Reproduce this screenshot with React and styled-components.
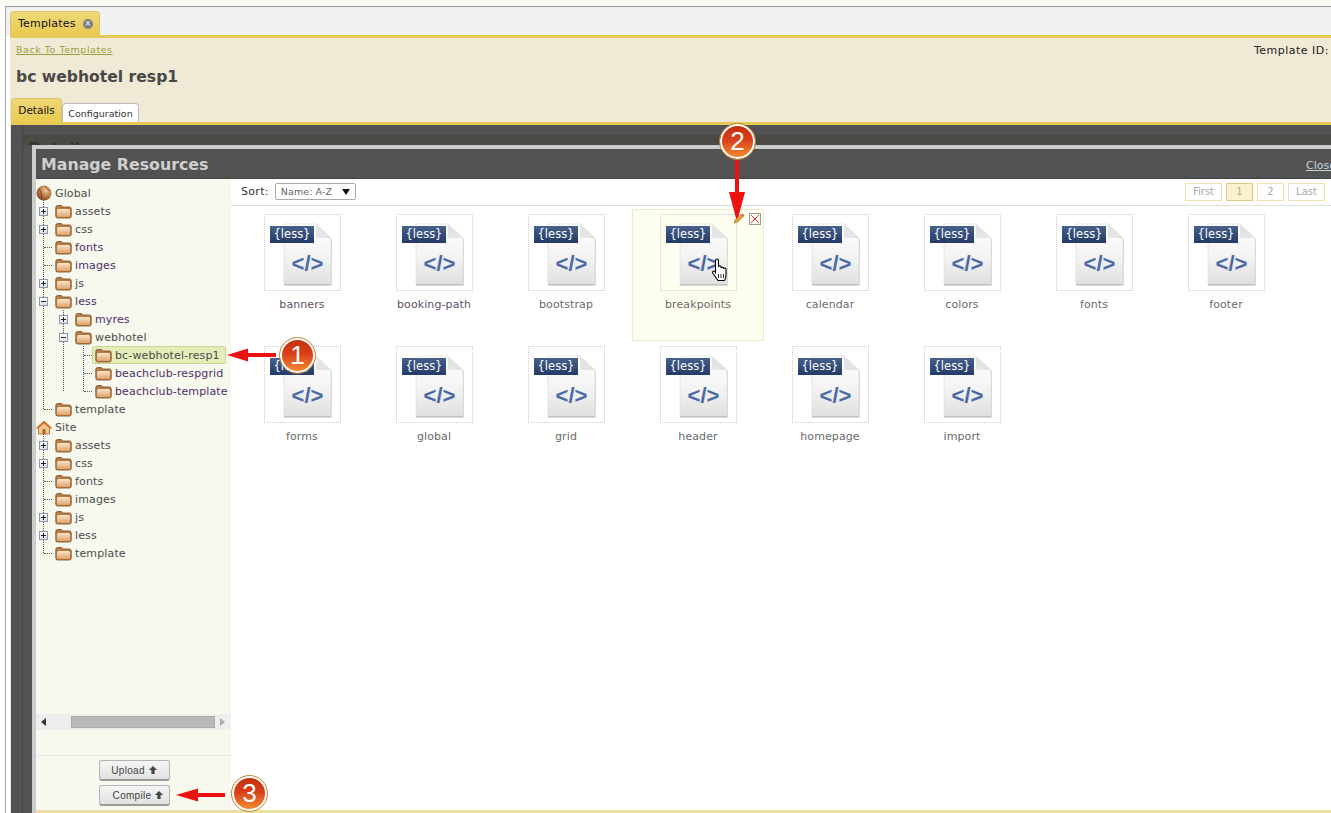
import React from "react";
import styled, { createGlobalStyle } from "styled-components";

const Global = createGlobalStyle`
  html, body { margin: 0; padding: 0; width: 1331px; height: 813px; overflow: hidden; background: #fff; }
  * { box-sizing: border-box; }
  body { font-family: "DejaVu Sans", Verdana, sans-serif; font-size: 11px; color: #444; }
`;

const Page = styled.div`position: relative; width: 1331px; height: 813px; overflow: hidden; background: linear-gradient(#fbfbf4 0 6px, #fff 6px); padding: 6px 0 0 5px;`;
const Frame = styled.div`height: 807px; border-top: 1px solid #999; border-left: 1px solid #aaa; display: flex; flex-direction: column;`;
const TabBar = styled.div`height: 28px; flex: none; background: #f1f1f2; padding: 4px 0 0 4px; display: flex;`;
const TopTab = styled.div`width: 90px; height: 24px; border-radius: 4px 4px 0 0; border: 1px solid #dcc566; border-bottom: 0; background: linear-gradient(#eed878, #eacb52); color: #111; display: flex; align-items: center; gap: 7px; padding-left: 7px; font-size: 11px; letter-spacing: .2px;`;
const CloseDot = styled.span`width: 10px; height: 10px; border-radius: 50%; background: #7c7c84; color: #fff; font-size: 8px; line-height: 10px; text-align: center; letter-spacing: 0;`;

const Panel = styled.div`flex: 1; min-height: 0; margin-left: 4px; background: #efe9d5; border-top: 3px solid #e6c957; display: flex; flex-direction: column;`;
const InfoRow = styled.div`height: 22px; padding: 6px 2px 0 6px; display: flex; justify-content: space-between;`;
const BackLink = styled.a`font-size: 9.5px; letter-spacing: .54px; color: #98a33f; text-decoration: underline;`;
const TemplateId = styled.span`font-size: 11px; letter-spacing: .5px; color: #222; line-height: 14px;`;
const Title = styled.h1`margin: 5px 0 0 6px; height: 24px; font-size: 15.6px; line-height: 24px; font-weight: 700; color: #484848; white-space: nowrap;`;
const SubTabs = styled.div`height: 24px; margin: 9px 0 0 1px; display: flex; align-items: flex-end; flex: none;`;
const SubTab = styled.div`
  border-radius: 4px 4px 0 0;
  color: ${p => (p.$active ? "#111" : "#333")};
  font-size: ${p => (p.$active ? "10.5px" : "9.5px")};
  width: ${p => (p.$active ? "51px" : "77px")};
  height: ${p => (p.$active ? "24px" : "19px")};
  padding-bottom: ${p => (p.$active ? "2px" : "0")};
  background: ${p => (p.$active ? "linear-gradient(#eed878, #eaca50)" : "#fff")};
  border: 1px solid ${p => (p.$active ? "#dcc566" : "#bbb")};
  border-bottom: 0;
  display: flex; align-items: center; justify-content: center;
`;
const DarkArea = styled.div`position: relative; flex: 1; min-height: 0; margin-left: 1px; border-top: 3px solid #e6c957; background: linear-gradient(90deg, #525252 0 11px, #444 11px 12px, #525252 12px); padding: 20px 0 0 21px;`;
const BehindTitle = styled.div`position: absolute; top: 10px; left: 12px; width: 1400px; font-size: 15.6px; line-height: 20px; font-weight: 700; color: #333; background: #4a4a45; padding: 4px 0 0 5px; height: 10px; overflow: hidden;`;

const Dialog = styled.div`position: relative; width: 1400px; height: 668px; border-top: 4px solid #cdcdcd; border-left: 4px solid #cdcdcd; background: #fff; display: flex; flex-direction: column;`;
const DialogHead = styled.div`height: 30px; flex: none; background: #525252; border-bottom: 1px solid #444; display: flex; align-items: center; padding: 0 0 0 5px; width: 1295px; justify-content: space-between;`;
const DialogTitle = styled.h2`margin: 0; padding-top: 2px; font-size: 15.8px; font-weight: 700; color: #cfcfcf;`;
const CloseLink = styled.a`font-size: 11px; color: #c8d4dc; text-decoration: underline; margin-top: 3px; width: 25px; overflow: hidden;`;
const DialogBody = styled.div`flex: 1; min-height: 0; display: flex; border-bottom: 3px solid #ebe0a2;`;

const Side = styled.aside`width: 195px; flex: none; background: #f7f8ee; display: flex; flex-direction: column;`;
const Tree = styled.div`flex: 1; min-height: 0; padding-top: 5px;`;
const Row = styled.div`height: 18px; display: flex; align-items: center; white-space: nowrap;`;
const Slot = styled.span`width: 19px; height: 18px; flex: none; position: relative; display: flex; align-items: center; justify-content: flex-start; padding-left: 3px;`;
const Stub = styled.span`width: 8px; margin-left: 5px; border-top: 1px dotted #555;`;
const Toggle = styled.span`width: 9px; height: 9px; border: 1px solid #8c98a8; background: linear-gradient(#fff, #dde2ea); position: relative;
  &::before { content: ""; position: absolute; left: 1px; right: 1px; top: 3px; height: 1px; background: #222; }
  ${p => p.$open ? "" : `&::after { content: ""; position: absolute; top: 1px; bottom: 1px; left: 3px; width: 1px; background: #222; }`}
`;
const Label = styled.span`font-size: 11px; letter-spacing: .14px; color: ${p => (p.$visited ? "#4f2f66" : "#4c4c4c")}; margin-left: 3px;`;
const Node = styled.span`display: inline-flex; align-items: center;
  ${p => p.$selected ? "height: 18px; margin-left: -3px; padding: 0 5px 0 2px; background: #e4ecb8; border: 1px solid #cdd79a; border-radius: 2px;" : ""}
`;
const Group = styled.div`position: relative; padding-left: ${p => p.$pad}px;
  &::before { content: ""; position: absolute; left: ${p => p.$line}px; top: ${p => p.$top}px; bottom: 9px; border-left: 1px dotted #555; }
`;
const Scroll = styled.div`height: 16px; flex: none; background: #eeeeee; display: flex; align-items: center; padding: 0 5px; margin-bottom: 25px;`;
const Thumb = styled.div`width: 144px; height: 12px; margin: 0 5px 0 25px; background: #b9b9b9; border: 1px solid #aaa;`;
const ArrowTri = styled.span`width: 0; height: 0; border-top: 4px solid transparent; border-bottom: 4px solid transparent;
  ${p => p.$dir === "left" ? "border-right: 5px solid #333;" : "border-left: 5px solid #aaa;"}
`;
const SideFoot = styled.div`flex: none; border-top: 1px dotted #ddd; padding: 4px 0 4px 1px; display: flex; flex-direction: column; align-items: center; gap: 4px;`;
const ActionBtn = styled.button`width: 71px; height: 21px; padding: 0 0 0 ${p => p.$pad}px; border: 1px solid #b4b4b4; border-bottom: 2px solid #999; border-radius: 3px; background: linear-gradient(#f5f5f5, #e2e2e2); font: 10px "Liberation Sans", Arial, sans-serif; letter-spacing: .3px; color: #444; display: flex; align-items: center; justify-content: center; gap: 4px;`;

const Main = styled.main`flex: 1; min-width: 0; display: flex; flex-direction: column;`;
const Toolbar = styled.div`height: 27px; flex: none; border-bottom: 1px solid #ddd; width: 1100px; display: flex; align-items: center; justify-content: space-between; padding: 0 6px 1px 10px;`;
const SortWrap = styled.div`display: flex; align-items: center; gap: 6px; font-size: 11px; letter-spacing: .3px; color: #333;`;
const SortBox = styled.div`width: 81px; height: 17px; border: 1px solid #aaa; border-radius: 2px; background: #fff; font-size: 9.5px; color: #666; letter-spacing: .1px; display: flex; align-items: center; justify-content: space-between; padding: 0 5px;`;
const Caret = styled.span`width: 0; height: 0; border-left: 4px solid transparent; border-right: 4px solid transparent; border-top: 6px solid #111;`;
const Pager = styled.div`display: flex; gap: 4px;`;
const PageBtn = styled.span`height: 18px; width: ${p => (p.$wide ? "37px" : "27px")}; border: 1px solid ${p => (p.$active ? "#e0cc78" : "#eee3ae")}; background: ${p => (p.$active ? "#fbf1cf" : "#fff")}; color: #aaa; font-size: 10px; display: flex; align-items: center; justify-content: center;`;

const Grid = styled.div`padding: 3px 0 0 5px; display: grid; grid-template-columns: repeat(8, 132px); grid-auto-rows: 132px;`;
const Cell = styled.div`position: relative; border: 1px solid ${p => (p.$hover ? "#e9eec6" : "transparent")}; background: ${p => (p.$hover ? "#fdfeef" : "transparent")}; display: flex; flex-direction: column; align-items: center; padding-top: 4px;`;
const IconBox = styled.div`width: 77px; height: 77px; border: 1px dotted #ccc; margin-left: 1px;`;
const CellLabel = styled.div`margin-top: 7px; font-size: 11px; letter-spacing: .1px; color: ${p => (p.$visited ? "#5f5068" : "#6a6a6a")};`;
const HoverTool = styled.span`position: absolute; top: ${p => p.$t}px; left: ${p => p.$l}px; display: flex; z-index: 4;`;
const DelBox = styled.span`position: absolute; top: 3px; left: 116px; width: 12px; height: 12px; border: 1px solid #999; background: #fdfdf5; display: flex;`;

const Callout = styled.span`position: absolute; left: ${p => p.$x}px; top: ${p => p.$y}px; width: 35px; height: 35px; border-radius: 50%; background: linear-gradient(#c4300e, #d8401a 45%, #f58a30); border: 2px solid #fff; outline: 1.5px solid #c9802a; color: #fff; font: 26px/31px "Liberation Sans", Arial, sans-serif; text-align: center; z-index: 3;`;
const ArrowSvg = styled.svg`position: absolute; left: ${p => p.$x}px; top: ${p => p.$y}px; z-index: 2;`;
const HandSvg = styled.svg`position: absolute; left: ${p => p.$x}px; top: ${p => p.$y}px;`;

const FolderIcon = () => (
  <svg width="17" height="15" viewBox="0 0 17 15" style={{ flex: "none" }}>
    <defs><linearGradient id="fg" x1="0" y1="0" x2="0" y2="1"><stop offset="0" stopColor="#fbe6cc" /><stop offset="1" stopColor="#e0a26a" /></linearGradient></defs>
    <path d="M.8 3.5 Q.8 1.5 2.5 1.5 H6 Q7 1.5 7.5 3 H14.5 Q16.2 3 16.2 5 V12 Q16.2 14 14.5 14 H2.5 Q.8 14 .8 12Z" fill="#b97c44" stroke="#83582f" strokeWidth=".9" />
    <rect x="2" y="5" width="13" height="8" rx="1.5" fill="url(#fg)" />
  </svg>
);
const GlobeIcon = () => (
  <svg width="16" height="16" viewBox="0 0 16 16" style={{ flex: "none" }}>
    <defs><radialGradient id="gb" cx=".65" cy=".3" r=".8"><stop offset="0" stopColor="#f0c8a0" /><stop offset=".6" stopColor="#b87040" /><stop offset="1" stopColor="#6d3c1c" /></radialGradient></defs>
    <circle cx="8" cy="8" r="7.5" fill="url(#gb)" />
    <path d="M3 4 Q6 6 5 9 Q7 12 5 15 M9 1 Q11 5 14 6" stroke="#7d4a24" fill="none" />
  </svg>
);
const HouseIcon = () => (
  <svg width="16" height="15" viewBox="0 0 16 15" style={{ flex: "none" }}>
    <path d="M8 1 L15.5 8 H13.5 V14 H2.5 V8 H.5Z" fill="#f2c98a" stroke="#b8803c" />
    <path d="M8 1 L15.5 8 H13 L8 3.5 L3 8 H.5Z" fill="#d9702c" />
    <rect x="6.5" y="9" width="3" height="5" fill="#a86a2c" />
  </svg>
);
const UpArrow = () => (
  <svg width="8" height="8" viewBox="0 0 8 8"><path d="M4 0 L8 4 H5.6 V8 H2.4 V4 H0Z" fill="#444" /></svg>
);
const DocIcon = ({ id }) => (
  <svg width="75" height="75" viewBox="0 0 75 75">
    <defs>
      <linearGradient id={`pg${id}`} x1="0" y1="0" x2="0" y2="1"><stop offset="0" stopColor="#ffffff" /><stop offset=".55" stopColor="#f3f3f3" /><stop offset="1" stopColor="#e0e0e0" /></linearGradient>
      <linearGradient id={`bg${id}`} x1="0" y1="0" x2="0" y2="1"><stop offset="0" stopColor="#47608c" /><stop offset="1" stopColor="#233a66" /></linearGradient>
    </defs>
    <path d="M19 10 H51 L66.5 24 V70.5 H19Z" fill="#b4b4b4" />
    <path d="M19 9 H51 L66 23 V69 H19Z" fill={`url(#pg${id})`} stroke="#dcdcdc" strokeWidth=".7" />
    <path d="M51 9 L66 23 H53 Q51 23 51 21Z" fill="#e4e4e4" />
    <rect x="5" y="11" width="44" height="17" fill={`url(#bg${id})`} />
    <text x="27" y="23" textAnchor="middle" fill="#fff" fontFamily="DejaVu Sans, sans-serif" fontSize="11.5">{"{less}"}</text>
    <text x="42.5" y="56" textAnchor="middle" fill="#4a69a6" fontFamily="Liberation Sans, Arial, sans-serif" fontWeight="700" fontSize="22">{"</>"}</text>
  </svg>
);

const Arrow = ({ x, y, w, h, d }) => (
  <ArrowSvg $x={x} $y={y} width={w} height={h} viewBox={`0 0 ${w} ${h}`}><path d={d} fill="#ee1111" /></ArrowSvg>
);

const TreeRow = ({ kind, name, visited, selected, icon }) => (
  <Row>
    <Slot>
      {kind === "plus" && <Toggle />}
      {kind === "minus" && <Toggle $open />}
      {kind === "stub" && <Stub />}
    </Slot>
    <Node $selected={selected}>
      {icon || <FolderIcon />}
      <Label $visited={visited}>{name}</Label>
    </Node>
  </Row>
);

const items = [
  ["banners", 1], ["booking-path", 1], ["bootstrap", 0], ["breakpoints", 0], ["calendar", 0], ["colors", 0], ["fonts", 0], ["footer", 0],
  ["forms", 0], ["global", 0], ["grid", 0], ["header", 0], ["homepage", 0], ["import", 0],
];

export default function App() {
  return (
    <Page>
      <Global />
      <Frame>
        <TabBar>
          <TopTab>Templates <CloseDot>×</CloseDot></TopTab>
        </TabBar>
        <Panel>
          <InfoRow>
            <BackLink>Back To Templates</BackLink>
            <TemplateId>Template ID:</TemplateId>
          </InfoRow>
          <Title>bc webhotel resp1</Title>
          <SubTabs>
            <SubTab $active>Details</SubTab>
            <SubTab>Configuration</SubTab>
          </SubTabs>
          <DarkArea>
            <BehindTitle>Details</BehindTitle>
            <Dialog>
              <DialogHead>
                <DialogTitle>Manage Resources</DialogTitle>
                <CloseLink>Close</CloseLink>
              </DialogHead>
              <DialogBody>
                <Side>
                  <Tree>
                    <Row>
                      <Node><GlobeIcon /><Label>Global</Label></Node>
                    </Row>
                    <Group $pad={0} $line={7} $top={-2}>
                      <TreeRow kind="plus" name="assets" />
                      <TreeRow kind="plus" name="css" />
                      <TreeRow kind="stub" name="fonts" visited />
                      <TreeRow kind="stub" name="images" visited />
                      <TreeRow kind="plus" name="js" />
                      <TreeRow kind="minus" name="less" visited />
                      <Group $pad={20} $line={27} $top={0}>
                        <TreeRow kind="plus" name="myres" visited />
                        <TreeRow kind="minus" name="webhotel" />
                        <Group $pad={20} $line={27} $top={0}>
                          <TreeRow kind="stub" name="bc-webhotel-resp1" selected />
                          <TreeRow kind="stub" name="beachclub-respgrid" visited />
                          <TreeRow kind="stub" name="beachclub-template" visited />
                        </Group>
                      </Group>
                      <TreeRow kind="stub" name="template" />
                    </Group>
                    <Row>
                      <Node><HouseIcon /><Label>Site</Label></Node>
                    </Row>
                    <Group $pad={0} $line={7} $top={-2}>
                      <TreeRow kind="plus" name="assets" />
                      <TreeRow kind="plus" name="css" />
                      <TreeRow kind="stub" name="fonts" />
                      <TreeRow kind="stub" name="images" />
                      <TreeRow kind="plus" name="js" />
                      <TreeRow kind="plus" name="less" />
                      <TreeRow kind="stub" name="template" />
                    </Group>
                  </Tree>
                  <Scroll>
                    <ArrowTri $dir="left" />
                    <Thumb />
                    <ArrowTri $dir="right" />
                  </Scroll>
                  <SideFoot>
                    <ActionBtn $pad={0}>Upload <UpArrow /></ActionBtn>
                    <ActionBtn $pad={8}>Compile <UpArrow /></ActionBtn>
                  </SideFoot>
                </Side>
                <Main>
                  <Toolbar>
                    <SortWrap>Sort: <SortBox>Name: A-Z <Caret /></SortBox></SortWrap>
                    <Pager>
                      <PageBtn $wide>First</PageBtn>
                      <PageBtn $active>1</PageBtn>
                      <PageBtn>2</PageBtn>
                      <PageBtn $wide>Last</PageBtn>
                    </Pager>
                  </Toolbar>
                  <Grid>
                    {items.map(([name, visited], i) => (
                      <Cell key={name} $hover={name === "breakpoints"}>
                        <IconBox><DocIcon id={i} /></IconBox>
                        <CellLabel $visited={visited}>{name}</CellLabel>
                        {name === "breakpoints" && (
                          <>
                            <HoverTool $t={3} $l={100}>
                              <svg width="12" height="11" viewBox="0 0 12 11">
                                <path d="M1 10 L2 7 L8 1.5 L10.5 3.5 L4 9.5Z" fill="#e8a03c" stroke="#a86a20" strokeWidth=".6" />
                                <path d="M8 1.5 L9.5 .5 L11.5 2.5 L10.5 3.5Z" fill="#d8604c" />
                              </svg>
                            </HoverTool>
                            <DelBox>
                              <svg width="10" height="10" viewBox="0 0 10 10"><path d="M1 1 L9 9 M9 1 L1 9" stroke="#e23b3b" strokeWidth="1" /></svg>
                            </DelBox>
                          </>
                        )}
                      </Cell>
                    ))}
                  </Grid>
                </Main>
              </DialogBody>
            </Dialog>
          </DarkArea>
        </Panel>
      </Frame>

      <HandSvg $x={712} $y={258} width="16" height="24" viewBox="0 0 16 24">
        <path d="M3.5 13 V2.5 a1.5 1.5 0 0 1 3 0 V9 a1.3 1.3 0 0 1 2.6 0 V10 a1.3 1.3 0 0 1 2.5 .3 V11 a1.2 1.2 0 0 1 2.4 .4 V17 q0 3 -1.5 5.5 H6 L1 15.5 q-1 -1.5 .3 -2.3 q1 -.6 2.2 1.3Z" fill="#fff" stroke="#000" strokeWidth="1.1" />
        <path d="M6.5 16v4 M9 16v4 M11.5 16v4" stroke="#000" strokeWidth=".8" />
      </HandSvg>

      <Arrow x={227} y={348} w={49} h={14} d="M0 7 L21 .5 V5 H49 V9 H21 V13.5Z" />
      <Callout $x={280} $y={338}>1</Callout>
      <Arrow x={729} y={160} w={16} h={62} d="M6 0 H10 V32 H16 L8 62 L0 32 H6Z" />
      <Callout $x={720} $y={124}>2</Callout>
      <Arrow x={176} y={788} w={49} h={14} d="M0 7 L22 .5 V5 H49 V9 H22 V13.5Z" />
      <Callout $x={232} $y={776}>3</Callout>
    </Page>
  );
}
